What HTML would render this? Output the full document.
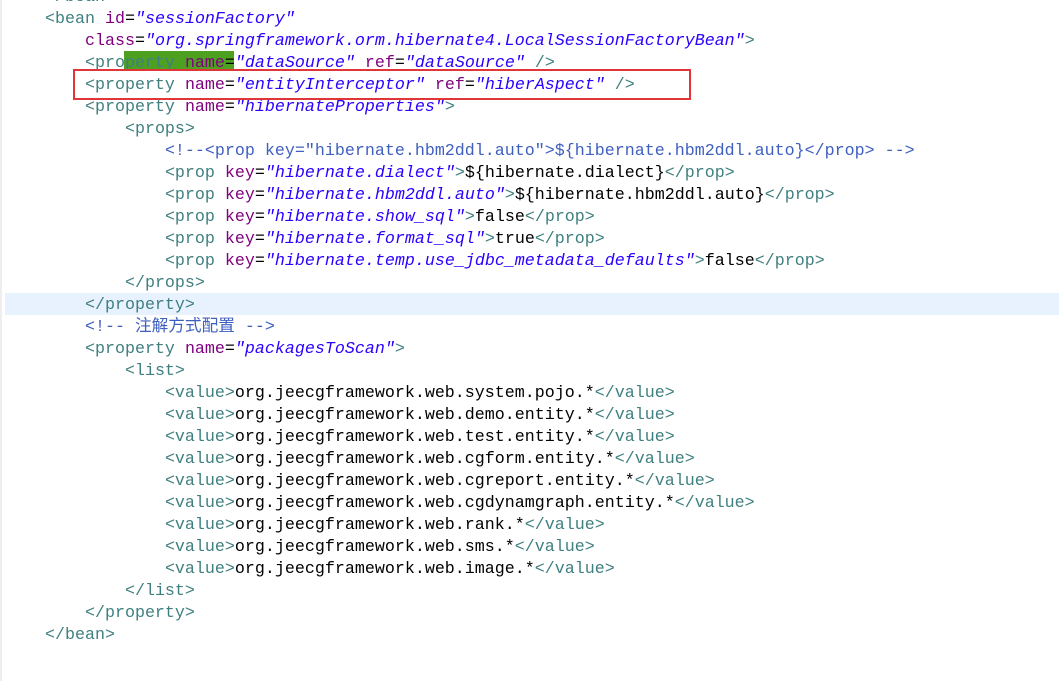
<!DOCTYPE html>
<html><head><meta charset="utf-8"><style>
html,body{margin:0;padding:0;background:#fff;width:1059px;height:681px;overflow:hidden;position:relative}
.code{position:absolute;left:5px;top:-13px;font-family:"Liberation Mono","Noto Sans CJK SC",monospace;font-size:16.67px;line-height:22px;white-space:pre;color:#000}
.t{color:#3f7f7f}.a{color:#7f007f}.v{color:#2a00ff;font-style:italic}.c{color:#3f5fbf}
.hl{position:absolute;left:5px;top:293px;width:1054px;height:22px;background:#e8f2fe}
.g{position:absolute;left:124px;top:51px;width:110px;height:18px;background:#4ea020}
.box{position:absolute;left:73px;top:69px;width:614px;height:27px;border:2px solid #e0363a}
.lm{position:absolute;left:0;top:0;width:2px;height:681px;background:#eee}
</style></head><body>
<div class="lm"></div><div class="hl"></div><div class="g"></div>
<div class="code"><span class="t">    &lt;/bean&gt;</span>
    <span class="t">&lt;bean</span> <span class="a">id</span>=<span class="v">"sessionFactory"</span>
        <span class="a">class</span>=<span class="v">"org.springframework.orm.hibernate4.LocalSessionFactoryBean"</span><span class="t">&gt;</span>
        <span class="t">&lt;property</span> <span class="a">name</span>=<span class="v">"dataSource"</span> <span class="a">ref</span>=<span class="v">"dataSource"</span> <span class="t">/&gt;</span>
        <span class="t">&lt;property</span> <span class="a">name</span>=<span class="v">"entityInterceptor"</span> <span class="a">ref</span>=<span class="v">"hiberAspect"</span> <span class="t">/&gt;</span>
        <span class="t">&lt;property</span> <span class="a">name</span>=<span class="v">"hibernateProperties"</span><span class="t">&gt;</span>
            <span class="t">&lt;props&gt;</span>
                <span class="c">&lt;!--&lt;prop key="hibernate.hbm2ddl.auto"&gt;${hibernate.hbm2ddl.auto}&lt;/prop&gt; --&gt;</span>
                <span class="t">&lt;prop</span> <span class="a">key</span>=<span class="v">"hibernate.dialect"</span><span class="t">&gt;</span>${hibernate.dialect}<span class="t">&lt;/prop&gt;</span>
                <span class="t">&lt;prop</span> <span class="a">key</span>=<span class="v">"hibernate.hbm2ddl.auto"</span><span class="t">&gt;</span>${hibernate.hbm2ddl.auto}<span class="t">&lt;/prop&gt;</span>
                <span class="t">&lt;prop</span> <span class="a">key</span>=<span class="v">"hibernate.show_sql"</span><span class="t">&gt;</span>false<span class="t">&lt;/prop&gt;</span>
                <span class="t">&lt;prop</span> <span class="a">key</span>=<span class="v">"hibernate.format_sql"</span><span class="t">&gt;</span>true<span class="t">&lt;/prop&gt;</span>
                <span class="t">&lt;prop</span> <span class="a">key</span>=<span class="v">"hibernate.temp.use_jdbc_metadata_defaults"</span><span class="t">&gt;</span>false<span class="t">&lt;/prop&gt;</span>
            <span class="t">&lt;/props&gt;</span>
        <span class="t">&lt;/property&gt;</span>
        <span class="c">&lt;!-- 注解方式配置 --&gt;</span>
        <span class="t">&lt;property</span> <span class="a">name</span>=<span class="v">"packagesToScan"</span><span class="t">&gt;</span>
            <span class="t">&lt;list&gt;</span>
                <span class="t">&lt;value&gt;</span>org.jeecgframework.web.system.pojo.*<span class="t">&lt;/value&gt;</span>
                <span class="t">&lt;value&gt;</span>org.jeecgframework.web.demo.entity.*<span class="t">&lt;/value&gt;</span>
                <span class="t">&lt;value&gt;</span>org.jeecgframework.web.test.entity.*<span class="t">&lt;/value&gt;</span>
                <span class="t">&lt;value&gt;</span>org.jeecgframework.web.cgform.entity.*<span class="t">&lt;/value&gt;</span>
                <span class="t">&lt;value&gt;</span>org.jeecgframework.web.cgreport.entity.*<span class="t">&lt;/value&gt;</span>
                <span class="t">&lt;value&gt;</span>org.jeecgframework.web.cgdynamgraph.entity.*<span class="t">&lt;/value&gt;</span>
                <span class="t">&lt;value&gt;</span>org.jeecgframework.web.rank.*<span class="t">&lt;/value&gt;</span>
                <span class="t">&lt;value&gt;</span>org.jeecgframework.web.sms.*<span class="t">&lt;/value&gt;</span>
                <span class="t">&lt;value&gt;</span>org.jeecgframework.web.image.*<span class="t">&lt;/value&gt;</span>
            <span class="t">&lt;/list&gt;</span>
        <span class="t">&lt;/property&gt;</span>
    <span class="t">&lt;/bean&gt;</span></div>
<div class="box"></div>
</body></html>
